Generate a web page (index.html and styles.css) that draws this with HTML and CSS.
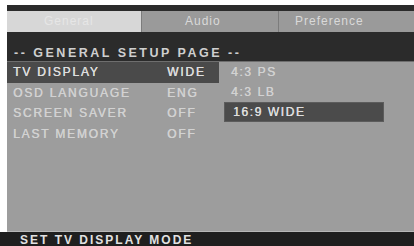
FILE: index.html
```html
<!DOCTYPE html>
<html>
<head>
<meta charset="utf-8">
<link rel="stylesheet" href="styles.css">
</head>
<body>
<div class="screen">
  <div class="main">
    <div class="tabs">
      <div class="tab tab-active">General</div>
      <div class="tab tab-audio">Audio</div>
      <div class="tab tab-pref">Preference</div>
    </div>
    <div class="header">-- GENERAL SETUP PAGE --</div>
    <div class="content">
      <div class="settings">
        <div class="row row-sel"><span class="label">TV DISPLAY</span><span class="value">WIDE</span></div>
        <div class="row"><span class="label">OSD LANGUAGE</span><span class="value">ENG</span></div>
        <div class="row"><span class="label">SCREEN SAVER</span><span class="value">OFF</span></div>
        <div class="row"><span class="label">LAST MEMORY</span><span class="value">OFF</span></div>
      </div>
      <div class="options">
        <div class="opt">4:3 PS</div>
        <div class="opt">4:3 LB</div>
        <div class="opt opt-sel">16:9 WIDE</div>
      </div>
    </div>
  </div>
  <div class="footer">SET TV DISPLAY MODE</div>
</div>
</body>
</html>
```

FILE: styles.css
```css
html, body {
  margin: 0;
  padding: 0;
  background: #ffffff;
}
body {
  width: 414px;
  height: 246px;
  overflow: hidden;
  font-family: "Liberation Sans", Arial, sans-serif;
}
.screen {
  display: flex;
  flex-direction: column;
  height: 246px;
  padding-top: 5px;
  box-sizing: border-box;
}
.main {
  flex: 1;
  margin-left: 7px;
  display: flex;
  flex-direction: column;
  background: #2b2b2b;
  min-height: 0;
}
.tabs {
  margin-top: 6px;
  height: 21px;
  display: flex;
}
.tab {
  height: 21px;
  line-height: 21px;
  font-size: 12px;
  letter-spacing: 1px;
  color: #d9d9d9;
  background: #9a9a9a;
  box-sizing: border-box;
  white-space: nowrap;
}
.tab-active {
  width: 134px;
  background: #d7d7d7;
  color: #e6e6e6;
  padding-left: 37px;
}
.tab-audio {
  width: 137px;
  border-left: 1px solid #7c7c7c;
  padding-left: 43px;
}
.tab-pref {
  flex: 1;
  border-left: 1px solid #7c7c7c;
  padding-left: 16px;
}
.header {
  height: 30px;
  box-sizing: border-box;
  padding: 14px 0 0 7px;
  line-height: 14px;
  font-size: 12.5px;
  font-weight: bold;
  letter-spacing: 2.5px;
  color: #cfcfcf;
  background: #2b2b2b;
  border-bottom: 1px solid #6e6e6e;
  white-space: nowrap;
}
.content {
  flex: 1;
  display: flex;
  gap: 5px;
  background: #9d9d9d;
  border-bottom: 1px solid #b8b8b8;
}
.settings {
  width: 212px;
  display: flex;
  flex-direction: column;
}
.row {
  height: 20.5px;
  display: flex;
  align-items: center;
  font-size: 12px;
  letter-spacing: 1.8px;
  color: #d2d2d2;
  text-shadow: 0.4px 0 0 currentColor;
  white-space: nowrap;
}
.row-sel {
  background: #4a4a4a;
  color: #dedede;
}
.label {
  width: 160px;
  padding-left: 6px;
  box-sizing: border-box;
}
.value {
  flex: 1;
}
.options {
  width: 160px;
  display: flex;
  flex-direction: column;
}
.opt {
  height: 20px;
  display: flex;
  align-items: center;
  padding-left: 7px;
  font-size: 12px;
  letter-spacing: 1.6px;
  color: #d2d2d2;
  text-shadow: 0.4px 0 0 currentColor;
  white-space: nowrap;
}
.opt-sel {
  background: #4b4b4b;
  color: #dedede;
  padding-left: 9px;
  box-shadow: inset 0 0 0 1px #5c5c5c;
}
.footer {
  height: 14px;
  box-sizing: border-box;
  padding: 2px 0 0 20px;
  line-height: 12px;
  font-size: 12px;
  font-weight: bold;
  letter-spacing: 2px;
  color: #e2e2e2;
  background: #1f1f1f;
  overflow: hidden;
  white-space: nowrap;
}
```
